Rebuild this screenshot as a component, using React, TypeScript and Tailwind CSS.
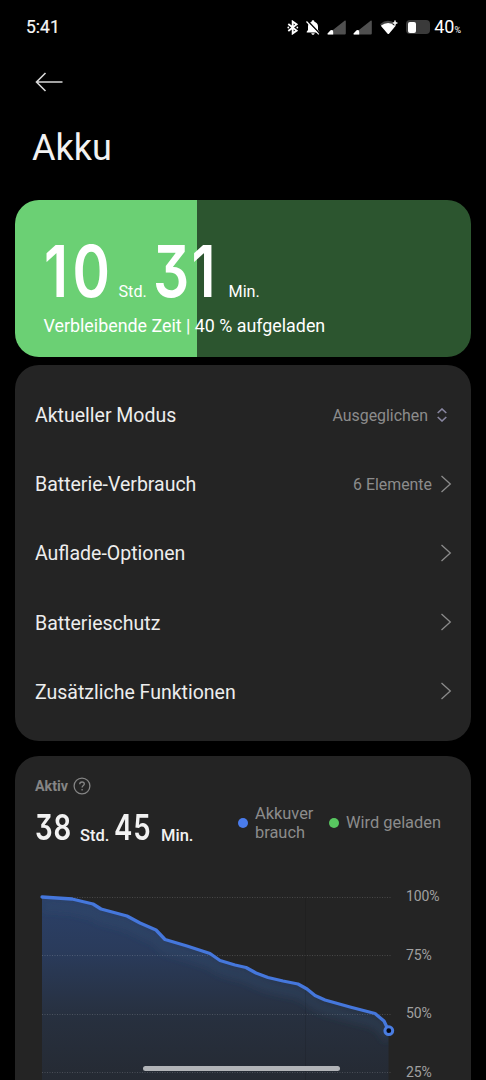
import type { ReactNode } from "react";

const DIGITS =
  "font-['Inter'] [font-feature-settings:'cv09'] leading-none inline-block origin-bottom-left";

function BluetoothIcon() {
  return (
    <svg width="12" height="15" viewBox="0 0 12 15" fill="none" stroke="#fff" strokeWidth="1.9">
      <path d="M1.3 4 9.6 10.6 5.7 13.4V1.6L9.6 4.4 1.3 11" />
      <circle cx="1.3" cy="7.5" r=".9" fill="#fff" stroke="none" />
      <circle cx="10.3" cy="7.5" r=".9" fill="#fff" stroke="none" />
    </svg>
  );
}

function BellOffIcon() {
  return (
    <svg width="14" height="15" viewBox="0 0 14 15">
      <path
        fill="#fff"
        d="M7 .2c.9 0 1.400.6 1.400 1.300v.3c2.200.6 3.600 2.300 3.600 4.600v3.700l1.300 1.700v.8H.7v-.8L2 10.100V6.400c0-2.300 1.400-4 3.600-4.600v-.3C5.600.8 6.100.2 7 .2zM5.300 13.200h3.400c0 .9-.8 1.500-1.700 1.500s-1.700-.6-1.700-1.500z"
      />
      <path d="M1.300.6 14 13.800" stroke="#000" strokeWidth="1.600" />
      <path d="M.5 1.500 12.800 14.300" stroke="#fff" strokeWidth="1.200" />
    </svg>
  );
}

function SignalIcon() {
  return (
    <svg width="19" height="15" viewBox="0 0 19 15">
      <path d="M1.500 13.500 17.600.7c.6-.5 1.200-.3 1.200.5v12.300q0 1-1 1H1.200Q0 14.500.9 13.700z" fill="#505050" />
      <path d="M.8 13.200 3.600 10.300Q6.200 9.200 6.200 12v2.500H1.200Q-.3 14.500.8 13.200z" fill="#fff" />
    </svg>
  );
}

function WifiIcon() {
  return (
    <svg width="18" height="15" viewBox="0 0 18 15">
      <path d="M0 4.200Q8-2.700 16 4.200L8.500 14z" fill="#444" />
      <path d="M.8 5.700Q8 .5 15.700 5.700L9 13.700q-.7.8-1.400 0z" fill="#fff" />
      <path d="M15 0v5.200M12.500 2.900h5" stroke="#000" strokeWidth="3" />
      <path d="M15 .6v4.800M12.600 3h4.800" stroke="#fff" strokeWidth="1.500" />
    </svg>
  );
}

function StatusBar() {
  return (
    <header className="flex h-[54px] shrink-0 items-center pl-[26px] pr-[25px]">
      <span className="text-[17.500px] text-[#f6f6f6] [-webkit-text-stroke:0.200px_#f6f6f6]">5:41</span>
      <div className="ml-auto flex items-center">
        <BluetoothIcon />
        <span className="ml-[7px] flex"><BellOffIcon /></span>
        <span className="ml-[7px] flex"><SignalIcon /></span>
        <span className="ml-[7px] flex"><SignalIcon /></span>
        <span className="ml-[8px] flex"><WifiIcon /></span>
        <span className="ml-[8px] flex h-[14px] w-[24px] items-center rounded-[4px] bg-[#3a3a3a] pl-[2px]">
          <span className="h-[11px] w-[8px] rounded-[2px] bg-white" />
        </span>
        <span className="ml-[4px] flex items-baseline text-white">
          <span className="text-[18px] leading-[20px]">40</span>
          <span className="text-[9px]">%</span>
        </span>
      </div>
    </header>
  );
}

function Chevron() {
  return (
    <svg width="12" height="18" viewBox="0 0 12 18" fill="none" stroke="#8b8b8b" strokeWidth="1.300">
      <path d="M1.500 1 10.300 9 1.500 17" />
    </svg>
  );
}

function UpDown() {
  return (
    <svg width="10" height="14" viewBox="0 0 10 14" fill="none" stroke="#8886a0" strokeWidth="1.600">
      <path d="M.7 5 5 1 9.300 5M.7 9 5 13 9.300 9" />
    </svg>
  );
}

function Row({ label, value, icon }: { label: string; value?: string; icon: ReactNode }) {
  return (
    <li className="flex h-[69.200px] items-center">
      <span className="pt-[2px] text-[19.500px] text-[#ededed]">{label}</span>
      <span className="ml-auto pt-[2px] text-[15.900px] text-[#8c8c8c]">{value}</span>
      {icon}
    </li>
  );
}

const LEVELS: [number, number][] = [
  [42, 897], [57, 898], [72, 899], [93, 904], [101, 909], [127, 916], [140, 923], [156, 930],
  [165, 939.5], [187, 946], [210, 953.5], [220, 960.5], [235, 965], [246, 967.5], [256, 973],
  [268, 977.5], [283, 981], [298, 984], [307, 989], [315, 995.5], [325, 1000], [350, 1007],
  [375, 1013.5], [384, 1021], [388.5, 1030.5],
];
const LINE = "M" + LEVELS.map(([x, y]) => `${x - 35} ${y - 880}`).join("L");

function Chart() {
  return (
    <svg className="block shrink-0" width="365" height="200" viewBox="0 0 365 200" fill="none">
      <defs>
        <linearGradient id="area" x1="0" y1="17" x2="0" y2="200" gradientUnits="userSpaceOnUse">
          <stop offset="0" stopColor="#2b4068" />
          <stop offset=".3" stopColor="#2a3b5b" />
          <stop offset=".65" stopColor="#27303f" />
          <stop offset="1" stopColor="#252a33" />
        </linearGradient>
        <filter id="soft" x="-10%" y="-20%" width="120%" height="150%">
          <feGaussianBlur stdDeviation="4" />
        </filter>
        <clipPath id="areaClip">
          <path d={`${LINE}V200H7Z`} />
        </clipPath>
      </defs>
      <path d={`${LINE}V200H7Z`} fill="url(#area)" />
      <g clipPath="url(#areaClip)">
        <path d={LINE} transform="translate(0 9)" stroke="#315070" strokeOpacity=".35" strokeWidth="9" filter="url(#soft)" />
      </g>
      <g stroke="#fff" strokeOpacity=".17" strokeDasharray="1 1.500">
        <path d="M7 17.500H357M7 75.500H357M7 134.500H357M7 192.500H357" />
      </g>
      <path d="M270.500 17V200" stroke="#000" strokeOpacity=".1" />
      <path d={LINE} stroke="#4577dc" strokeWidth="3.300" strokeLinecap="round" strokeLinejoin="round" />
      <circle cx="353.800" cy="150.700" r="3.900" fill="#05070f" stroke="#4a7de2" strokeWidth="3" />
    </svg>
  );
}

export default function App() {
  return (
    <div className="relative flex h-[1080px] w-[486px] flex-col overflow-hidden bg-black font-['Roboto',sans-serif]">
      <StatusBar />
      <nav className="flex h-[55px] shrink-0 items-center pl-[35px]">
        <svg width="28" height="20" viewBox="0 0 28 20" fill="none" stroke="#d8d8d8" strokeWidth="1.600">
          <path d="M27.500 10H1.500M10.500 1 1.500 10 10.500 19" />
        </svg>
      </nav>
      <h1 className="ml-[32px] mt-[14px] h-[77px] shrink-0 text-[36px] leading-[50px] text-[#f2f2f2]">Akku</h1>

      <section className="mx-[15px] h-[157px] w-[456px] shrink-0 overflow-hidden rounded-[24px] bg-[linear-gradient(to_right,#6bd074_182.500px,#2c552f_182.500px)] pl-[28.500px] text-white">
        <div className="flex h-[107px] items-end">
          <span className={`${DIGITS} w-[75px] scale-x-[0.8] text-[71px] font-semibold tracking-[5.500px]`}>10</span>
          <span className="w-[34px] pb-[3px] text-[16.200px]">Std.</span>
          <span className={`${DIGITS} w-[76px] scale-x-[0.8] text-[71px] font-semibold tracking-[3px]`}>31</span>
          <span className="pb-[3px] text-[16.200px]">Min.</span>
        </div>
        <p className="mt-[7px] text-[17.850px] leading-[24px]">Verbleibende Zeit | 40 % aufgeladen</p>
      </section>

      <ul className="mx-[15px] mt-[8px] h-[376px] w-[456px] shrink-0 rounded-[24px] bg-[#242424] pl-[20px] pr-[19px] pt-[15px]">
        <Row label="Aktueller Modus" value="Ausgeglichen" icon={<span className="ml-[9px] mr-[5px]"><UpDown /></span>} />
        <Row label="Batterie-Verbrauch" value="6 Elemente" icon={<span className="ml-[8px]"><Chevron /></span>} />
        <Row label="Auflade-Optionen" icon={<Chevron />} />
        <Row label="Batterieschutz" icon={<Chevron />} />
        <Row label="Zusätzliche Funktionen" icon={<Chevron />} />
      </ul>

      <section className="mx-[15px] mt-[15px] h-[340px] w-[456px] shrink-0 rounded-t-[24px] bg-[#242424] pl-[20px]">
        <div className="flex h-[42px] items-end gap-[5px] pb-[3px] text-[#858585]">
          <span className="text-[14.300px] font-bold leading-[18px]">Aktiv</span>
          <svg width="18" height="18" viewBox="0 0 18 18" fill="none" stroke="#858585" strokeWidth="1.300">
            <circle cx="9" cy="9" r="7.900" />
            <path d="M6.700 7.300C6.700 5.800 7.700 5 9 5s2.300.8 2.300 2c0 1.500-2.200 1.700-2.200 3.600M9.100 12v1.400" />
          </svg>
        </div>
        <div className="flex h-[82px] text-[#f2f2f2]">
          <div className="flex h-[47px] w-[203px] items-end">
            <span className={`${DIGITS} w-[45px] scale-x-[0.79] text-[35px] font-semibold tracking-[1px]`}>38</span>
            <span className="w-[34px] text-[16.500px] font-medium leading-[18px]">Std.</span>
            <span className={`${DIGITS} w-[47px] scale-x-[0.79] text-[35px] font-semibold tracking-[1px]`}>45</span>
            <span className="text-[16.500px] font-medium leading-[18px]">Min.</span>
          </div>
          <div className="flex h-[49px] items-center text-[16.400px] leading-[19px] text-[#8c8c8c]">
            <span className="size-[10px] rounded-full bg-[#4a7cec]" />
            <span className="ml-[7px] w-[74px]">Akkuver<br />brauch</span>
            <span className="size-[10px] rounded-full bg-[#58c760]" />
            <span className="ml-[7px]">Wird geladen</span>
          </div>
        </div>
        <div className="flex">
          <Chart />
          <div className="ml-[6px] flex flex-col pt-[1px] text-[14px] tracking-[-0.150px] text-[#a0a0a0]">
            <span className="h-[58.500px] leading-[30px]">100%</span>
            <span className="h-[58.500px] leading-[30px]">75%</span>
            <span className="h-[58.500px] leading-[30px]">50%</span>
            <span className="leading-[30px]">25%</span>
          </div>
        </div>
      </section>

      <div className="absolute left-[143px] top-[1066px] h-[5px] w-[197px] rounded-full bg-[#b2b4b8]" />
    </div>
  );
}
